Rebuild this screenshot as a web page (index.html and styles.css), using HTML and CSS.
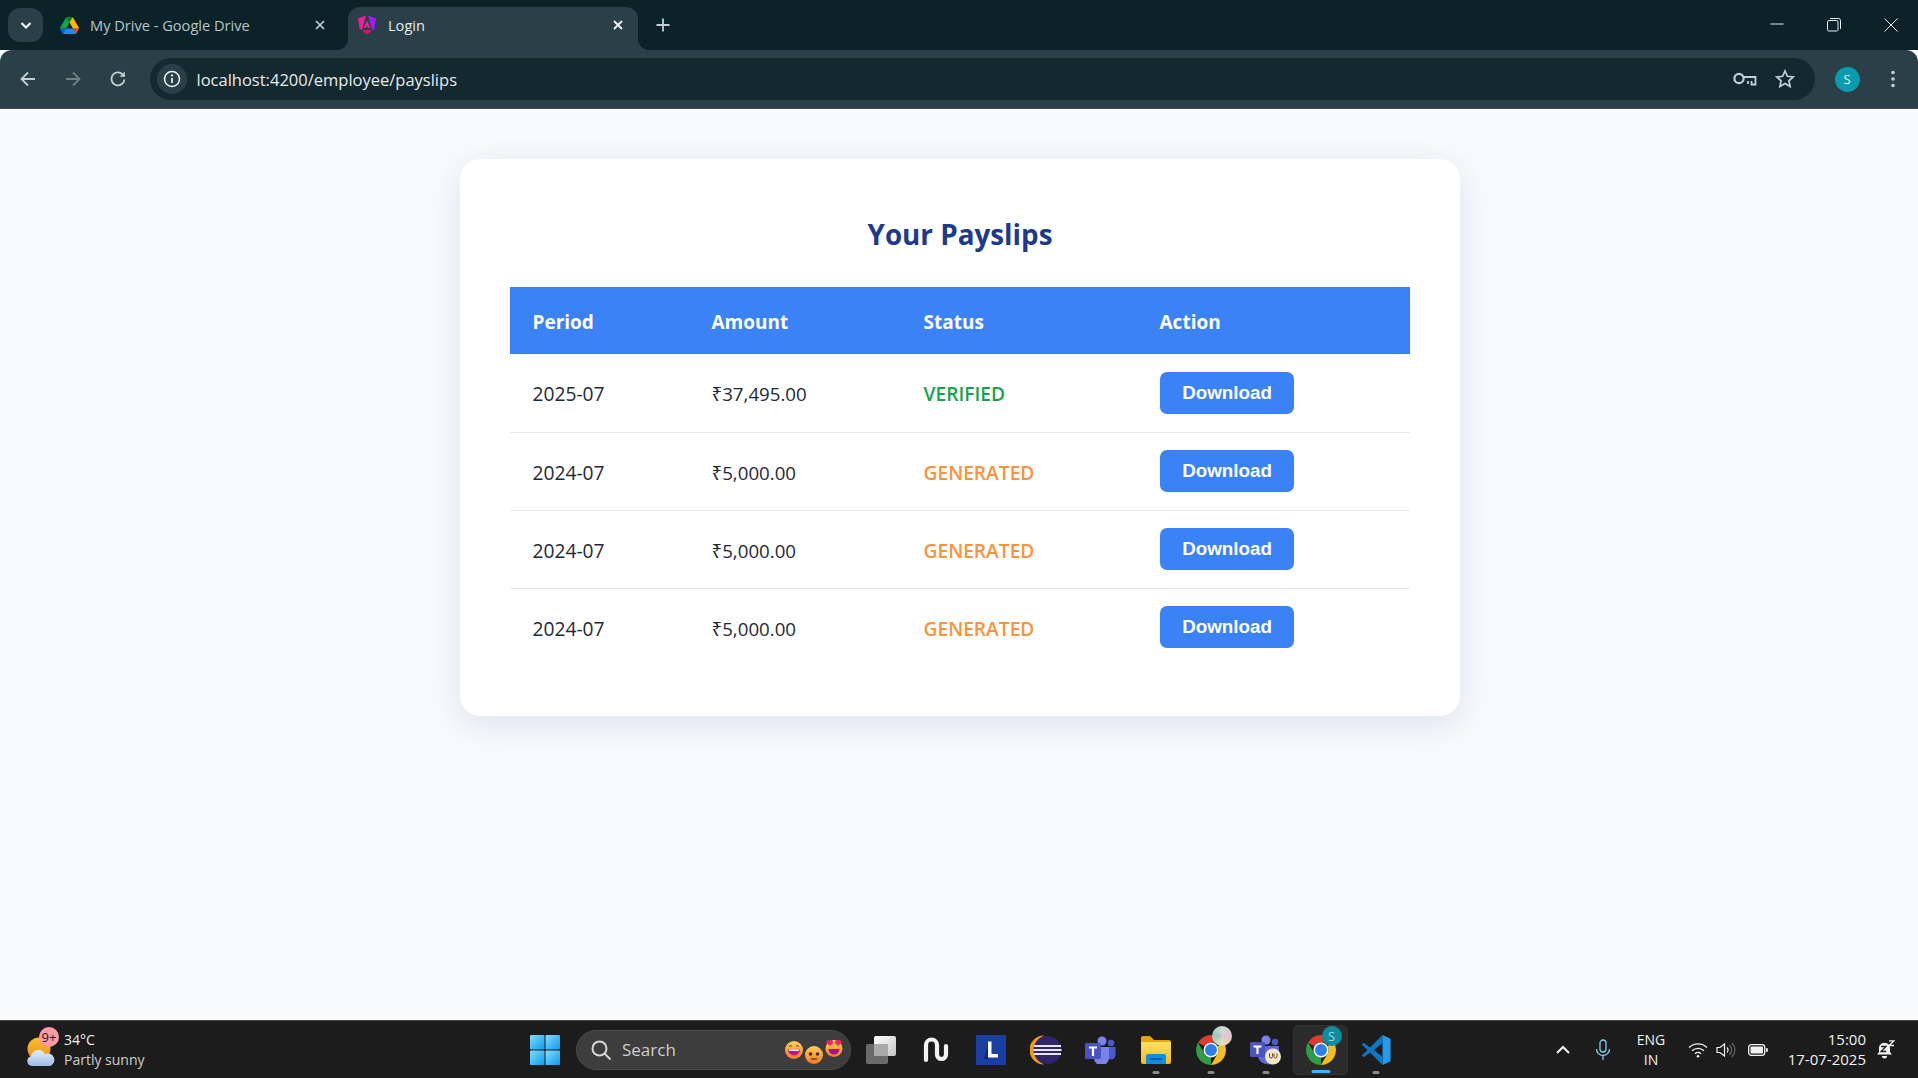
FILE: index.html
```html
<!DOCTYPE html>
<html lang="en">
<head>
<meta charset="utf-8">
<title>Login</title>
<link rel="stylesheet" href="styles.css">
</head>
<body>
<svg class="defs" width="0" height="0" aria-hidden="true">
  <defs>
    <symbol id="chrome" viewBox="4 4 40 40">
      <path d="M6.68 14A20 20 0 0 1 41.32 14L24 14A10 10 0 0 0 15.34 19Z" fill="#db3c30"/>
      <path d="M41.32 14A20 20 0 0 1 24 44L32.66 29A10 10 0 0 0 32.66 19Z" fill="#f5bd1f"/>
      <path d="M24 44A20 20 0 0 1 6.68 14L15.34 29A10 10 0 0 0 24 34Z" fill="#2f9e49"/>
      <circle cx="24" cy="24" r="10" fill="#fff"/>
      <circle cx="24" cy="24" r="8" fill="#2f7fe8"/>
    </symbol>
    <linearGradient id="win" x1="0" y1="0" x2="1" y2="1"><stop offset="0" stop-color="#86dcf8"/><stop offset="1" stop-color="#0a9bf0"/></linearGradient>
    <linearGradient id="emoji" x1="0" y1="0" x2="0" y2="1"><stop offset="0" stop-color="#ffd25a"/><stop offset="1" stop-color="#f9762a"/></linearGradient>
    <linearGradient id="sun" x1="0" y1="0" x2="0" y2="1"><stop offset="0" stop-color="#f9c22e"/><stop offset="1" stop-color="#ef8a1a"/></linearGradient>
    <linearGradient id="cloud" x1="0" y1="0" x2="0" y2="1"><stop offset="0" stop-color="#e6effa"/><stop offset="1" stop-color="#9dbbe6"/></linearGradient>
    <linearGradient id="folder" x1="0" y1="0" x2="0" y2="1"><stop offset="0" stop-color="#ffe16a"/><stop offset="1" stop-color="#f7b916"/></linearGradient>
    <linearGradient id="tv" x1="0" y1="0" x2="1" y2="1"><stop offset="0" stop-color="#ffffff"/><stop offset="1" stop-color="#c4c4c4"/></linearGradient>
  </defs>
</svg>

<div class="tabstrip">
  <button class="tab-search" type="button">
    <svg width="14" height="14" viewBox="0 0 14 14"><path d="M2.5 5l4.5 4.5L11.500 5" class="ic-white" stroke-width="2.2"/></svg>
  </button>
  <div class="tab tab-idle">
    <svg class="favicon" width="19" height="17" viewBox="0 0 87.3 78">
      <path d="m6.6 66.85 3.85 6.65c.8 1.4 1.95 2.5 3.3 3.3l13.75-23.8h-27.5c0 1.55.4 3.1 1.2 4.5z" fill="#0066da"/>
      <path d="m43.65 25-13.75-23.8c-1.35.8-2.5 1.9-3.3 3.3l-25.4 44a9.06 9.06 0 0 0 -1.2 4.5h27.5z" fill="#00ac47"/>
      <path d="m73.55 76.8c1.35-.8 2.5-1.9 3.3-3.3l1.6-2.75 7.65-13.25c.8-1.4 1.2-2.95 1.2-4.5h-27.502l5.852 11.5z" fill="#ea4335"/>
      <path d="m43.65 25 13.75-23.8c-1.35-.8-2.9-1.2-4.5-1.2h-18.5c-1.6 0-3.15.45-4.5 1.2z" fill="#00832d"/>
      <path d="m59.8 53h-32.3l-13.75 23.8c1.35.8 2.9 1.2 4.5 1.2h50.8c1.6 0 3.15-.45 4.5-1.2z" fill="#2684fc"/>
      <path d="m73.4 26.5-12.7-22c-.8-1.4-1.95-2.5-3.3-3.3l-13.75 23.8 16.15 28h27.45c0-1.55-.4-3.1-1.2-4.5z" fill="#ffba00"/>
    </svg>
    <span class="tab-title">My Drive - Google Drive</span>
    <svg class="tab-close" width="12" height="12" viewBox="0 0 12 12"><path d="M2 2l8 8M10 2l-8 8" class="ic-soft" stroke-width="1.7"/></svg>
  </div>
  <div class="tab tab-active">
    <svg class="favicon" width="20" height="20" viewBox="0 0 20 20">
      <path d="M9 0.5L1 3.5l1.6 10.3L5 15.2Z" fill="#ee1f9b"/>
      <path d="M11 0.5l8 3-1.6 10.3L15 15.2Z" fill="#9a1ff0"/>
      <path d="M10 5.5L6.8 13h2l.5-1.3h1.4l.5 1.3h2Z" fill="#e8288d"/>
      <path d="M6 15h8v1.8L10 19.5 6 16.8Z" fill="#e60d55"/>
    </svg>
    <span class="tab-title tab-title-active">Login</span>
    <svg class="tab-close" width="12" height="12" viewBox="0 0 12 12"><path d="M2 2l8 8M10 2l-8 8" class="ic-white" stroke-width="1.9"/></svg>
  </div>
  <svg class="new-tab" width="14" height="14" viewBox="0 0 14 14"><path d="M7 0.5v13M0.5 7h13" class="ic-soft" stroke-width="1.8"/></svg>
  <div class="win-controls">
    <svg width="14" height="14" viewBox="0 0 14 14"><path d="M0.5 6h13" class="ic-bright" stroke-width="1"/></svg>
    <svg width="14" height="14" viewBox="0 0 14 14"><rect x="0.5" y="2.5" width="10.5" height="10.5" rx="1.5" class="ic-bright" stroke-width="1"/><path d="M3 0.5h8.5a2 2 0 0 1 2 2V11" class="ic-bright" stroke-width="1"/></svg>
    <svg width="14" height="14" viewBox="0 0 14 14"><path d="M0.5 0.5l13 13M13.5 0.5l-13 13" class="ic-bright" stroke-width="1"/></svg>
  </div>
</div>

<div class="toolbar">
  <svg class="tool-ic" width="18" height="18" viewBox="0 0 18 18"><path d="M16 9H2.5M9 2.5L2.5 9 9 15.5" class="ic-soft" stroke-width="1.8"/></svg>
  <svg class="tool-ic" width="18" height="18" viewBox="0 0 18 18"><path d="M2 9h13.5M9 2.5L15.5 9 9 15.5" class="ic-dim" stroke-width="1.8"/></svg>
  <svg class="tool-ic" width="18" height="18" viewBox="0 0 18 18"><path d="M15.4 9.5a6.5 6.5 0 1 1-1.8-5.1L15.5 6.3" class="ic-soft" stroke-width="1.8"/><path d="M15.8 1.5v5.3h-5.3" class="ic-soft-fill"/></svg>
  <div class="omnibox">
    <span class="info-wrap">
      <svg width="18" height="18" viewBox="0 0 18 18"><circle cx="9" cy="9" r="7.5" class="ic-bright" stroke-width="1.6"/><path d="M9 8v5" class="ic-bright" stroke-width="1.8"/><circle cx="9" cy="5.4" r="1.1" class="ic-bright-fill"/></svg>
    </span>
    <span class="url">localhost:4200/employee/payslips</span>
    <svg class="key" width="24" height="14" viewBox="0 0 24 14"><circle cx="6" cy="6.500" r="4.6" class="ic-soft" stroke-width="2.200"/><path d="M10.5 5H22.5V12.500H18.500V9M15 9v3" class="ic-soft" stroke-width="1.8"/></svg>
    <svg class="star" width="20" height="20" viewBox="0 0 20 20"><path d="M10 2l2.4 5.3 5.8.6-4.3 3.9 1.2 5.7L10 14.6l-5.1 2.9 1.2-5.7L1.800 7.900l5.800-.6Z" class="ic-soft" stroke-width="1.700"/></svg>
  </div>
  <span class="avatar">S</span>
  <svg class="dots" width="6" height="18" viewBox="0 0 6 18"><circle cx="3" cy="2.500" r="1.800" class="ic-soft-fill"/><circle cx="3" cy="9" r="1.800" class="ic-soft-fill"/><circle cx="3" cy="15.500" r="1.800" class="ic-soft-fill"/></svg>
</div>

<main class="page">
  <section class="card">
    <h2 class="card-title">Your Payslips</h2>
    <table class="slips">
      <colgroup><col class="c1"><col class="c2"><col class="c3"><col class="c4"></colgroup>
      <thead>
        <tr><th>Period</th><th>Amount</th><th>Status</th><th>Action</th></tr>
      </thead>
      <tbody>
        <tr><td>2025-07</td><td class="money">₹37,495.00</td><td class="verified">VERIFIED</td><td class="act"><button class="dl" type="button">Download</button></td></tr>
        <tr><td>2024-07</td><td class="money">₹5,000.00</td><td class="generated">GENERATED</td><td class="act"><button class="dl" type="button">Download</button></td></tr>
        <tr><td>2024-07</td><td class="money">₹5,000.00</td><td class="generated">GENERATED</td><td class="act"><button class="dl" type="button">Download</button></td></tr>
        <tr><td>2024-07</td><td class="money">₹5,000.00</td><td class="generated">GENERATED</td><td class="act"><button class="dl" type="button">Download</button></td></tr>
      </tbody>
    </table>
  </section>
</main>

<footer class="taskbar">
  <div class="weather">
    <span class="weather-ic">
      <svg width="30" height="32" viewBox="0 0 30 32">
        <circle cx="13" cy="13" r="11.500" fill="url(#sun)"/>
        <path d="M6 30a5 5 0 0 1-1-9.800 7.500 7.500 0 0 1 14-2.200 6 6 0 0 1 5.500 12Z" fill="url(#cloud)"/>
      </svg>
      <span class="badge">9+</span>
    </span>
    <span class="weather-text"><span class="temp">34°C</span><span class="cond">Partly sunny</span></span>
  </div>
  <div class="start">
    <svg width="30" height="30" viewBox="0 0 30 30">
      <rect x="0" y="0" width="14.500" height="14.500" rx="1" fill="url(#win)"/>
      <rect x="15.500" y="0" width="14.500" height="14.500" rx="1" fill="url(#win)"/>
      <rect x="0" y="15.500" width="14.500" height="14.500" rx="1" fill="url(#win)"/>
      <rect x="15.500" y="15.500" width="14.500" height="14.500" rx="1" fill="url(#win)"/>
    </svg>
  </div>
  <div class="search">
    <svg width="22" height="22" viewBox="0 0 22 22"><circle cx="9.500" cy="9.500" r="7" class="ic-search" stroke-width="2"/><path d="M14.500 14.500l6 6" class="ic-search" stroke-width="2"/></svg>
    <span class="search-text">Search</span>
    <span class="emojis">
      <svg class="em em1" width="18" height="18" viewBox="0 0 18 18"><circle cx="9" cy="9" r="9" fill="url(#emoji)"/><path d="M3 8.500h12a6 6 0 0 1-12 0Z" fill="#b4178f"/><path d="M4 8.500h10v1.500H4Z" fill="#fff"/><path d="M4 5.500q1.500-2 3 0M11 5.500q1.500-2 3 0" fill="none" stroke="#6b3a10" stroke-width="1"/></svg>
      <svg class="em em2" width="18" height="18" viewBox="0 0 18 18"><circle cx="9" cy="9" r="9" fill="url(#emoji)"/><circle cx="5.500" cy="8" r="1.800" fill="#4a2a10"/><circle cx="12.500" cy="8" r="1.800" fill="#4a2a10"/><path d="M6 13h6" stroke="#4a2a10" stroke-width="1.200"/></svg>
      <svg class="em em3" width="18" height="18" viewBox="0 0 18 18"><circle cx="9" cy="9.500" r="8.500" fill="url(#emoji)"/><path d="M3.500 10h11a5.500 5.500 0 0 1-11 0Z" fill="#a5158a"/><path d="M5 1.500c-2-1.500-4 .5-3.500 2.500L5 7l3-3c.6-2-1.500-4-3-2.500ZM13 1.500c-1.500-1.500-3.600.5-3 2.500l3 3 3.500-3c.5-2-1.500-4-3.500-2.500Z" fill="#f4265e"/></svg>
    </span>
  </div>

  <div class="apps">
    <span class="app">
      <svg width="30" height="28" viewBox="0 0 30 28">
        <rect x="0" y="8" width="22" height="20" rx="2" fill="#6a6a6a"/>
        <rect x="8" y="0" width="22" height="20" rx="2" fill="url(#tv)"/>
        <rect x="8" y="8" width="14" height="12" fill="#a9a9a9"/>
      </svg>
    </span>
    <span class="app">
      <svg width="28" height="28" viewBox="0 0 28 28"><path d="M4 24V9a5.500 5.500 0 0 1 11 0V18.500a4.500 4.500 0 0 0 9 0V10" fill="none" stroke="#f3f3f3" stroke-width="4.200" stroke-linecap="round"/></svg>
    </span>
    <span class="app">
      <svg width="30" height="30" viewBox="0 0 30 30">
        <rect width="30" height="30" fill="#1a3fa3"/>
        <path d="M9 21l3-12v15H8Z" fill="#0f2a63"/>
        <path d="M12 6.500h3.500V19H22v3.500H12Z" fill="#fff"/>
      </svg>
    </span>
    <span class="app">
      <svg width="32" height="30" viewBox="0 0 32 30">
        <path d="M14 0.500a14.500 14.500 0 0 0 0 29 16 16 0 0 1 0-29Z" fill="#f39a1c"/>
        <circle cx="17.500" cy="15" r="14" fill="#2f2569"/>
        <path d="M4 11h27M3.500 15h28M4 19h27" stroke="#e9e6f5" stroke-width="2"/>
      </svg>
    </span>
    <span class="app">
      <svg width="32" height="28" viewBox="0 0 32 28">
        <circle cx="17" cy="5" r="4.500" fill="#7b83eb"/>
        <circle cx="26" cy="7" r="3.200" fill="#5059c9"/>
        <path d="M21 11h9.500v8a4.500 4.500 0 0 1-9 0Z" fill="#5059c9"/>
        <path d="M9 11h15v11a7.500 7.500 0 0 1-15 0Z" fill="#7b83eb"/>
        <rect x="0" y="7" width="16" height="16" rx="1.500" fill="#4b53bc"/>
        <path d="M4 10.500h8v2H9.100V20H6.900v-7.500H4Z" fill="#fff"/>
      </svg>
    </span>
    <span class="app app-open">
      <svg width="30" height="28" viewBox="0 0 30 28">
        <path d="M0 2a2 2 0 0 1 2-2h7l4 4h15a2 2 0 0 1 2 2v4H0Z" fill="#e8a30f"/>
        <path d="M0 6h30v20a2 2 0 0 1-2 2H2a2 2 0 0 1-2-2Z" fill="url(#folder)"/>
        <path d="M5 20a2 2 0 0 1 2-2h16a2 2 0 0 1 2 2v8H5Z" fill="#0d8ee0"/>
        <rect x="9" y="22" width="12" height="2" fill="#0a5fa8"/>
      </svg>
    </span>
    <span class="app app-open">
      <span class="chrome-wrap">
        <svg width="30" height="30" viewBox="0 0 30 30"><use href="#chrome"/></svg>
        <span class="profile-dot profile-photo"></span>
      </span>
    </span>
    <span class="app app-open">
      <svg width="32" height="30" viewBox="0 0 32 30">
        <circle cx="16" cy="5" r="4.500" fill="#7b83eb"/>
        <circle cx="25" cy="7" r="3.200" fill="#5059c9"/>
        <path d="M8 11h21v10a10 8 0 0 1-21 0Z" fill="#5f67d8"/>
        <rect x="0" y="7" width="15" height="15" rx="1.500" fill="#4b53bc"/>
        <path d="M3.500 10.500h8v2H8.600V19H6.400v-6.500H3.500Z" fill="#fff"/>
        <circle cx="23" cy="21.500" r="8" fill="#f3e6c8"/>
        <path d="M19.500 18.500v3a1.500 1.500 0 0 0 3 0v-3M24 18.500v3a1.500 1.500 0 0 0 3 0v-3" fill="none" stroke="#5e4a26" stroke-width="1"/>
      </svg>
    </span>
    <span class="app app-active">
      <span class="chrome-wrap">
        <svg width="30" height="30" viewBox="0 0 30 30"><use href="#chrome"/></svg>
        <span class="profile-dot profile-s">S</span>
      </span>
    </span>
    <span class="app app-open">
      <svg width="30" height="30" viewBox="0 0 30 30">
        <path d="M21.500 0L29.500 3.700V26.300L21.500 30Z" fill="#1f9cf0"/>
        <path d="M21.500 0L9 12.500 3 8 0.500 9.300 6.500 15 0.500 20.700 3 22 9 17.500 21.500 30V21.700L12.800 15 21.500 8.300Z" fill="#0a78c4"/>
      </svg>
    </span>
  </div>

  <div class="tray">
    <svg class="tr-chev" width="16" height="10" viewBox="0 0 16 10"><path d="M2 8l6-6 6 6" class="ic-tray" stroke-width="2"/></svg>
    <svg class="tr-mic" width="16" height="22" viewBox="0 0 16 22"><rect x="5" y="1" width="6" height="12" rx="3" class="ic-mic" stroke-width="1.300"/><path d="M1.500 10a6.500 6.500 0 0 0 13 0M8 16.500V21" class="ic-mic" stroke-width="1.300"/></svg>
    <span class="lang"><span>ENG</span><span>IN</span></span>
    <svg class="tr-wifi" width="20" height="16" viewBox="0 0 20 16"><path d="M1 5.500a13 13 0 0 1 18 0M4 8.700a8.700 8.700 0 0 1 12 0M7 11.700a4.300 4.300 0 0 1 6 0" class="ic-tray" stroke-width="1.300"/><circle cx="10" cy="14.200" r="1.300" class="ic-tray-fill"/></svg>
    <svg class="tr-vol" width="20" height="18" viewBox="0 0 20 18"><path d="M1 6.500h3L8.500 3v12L4 11.500H1Z" class="ic-tray" stroke-width="1.200"/><path d="M11 6.500a3.500 3.500 0 0 1 0 5" class="ic-tray" stroke-width="1.200"/><path d="M13.500 4a7 7 0 0 1 0 10M16 2a10 10 0 0 1 0 14" class="ic-traydim" stroke-width="1.200"/></svg>
    <svg class="tr-bat" width="20" height="12" viewBox="0 0 20 12"><rect x="0.700" y="0.700" width="16" height="10.600" rx="2.500" class="ic-tray" stroke-width="1.300"/><rect x="2.500" y="2.500" width="12.500" height="7" rx="1" class="ic-tray-fill"/><rect x="18" y="4" width="1.800" height="4" rx="0.800" class="ic-tray-fill"/></svg>
    <span class="clock"><span>15:00</span><span>17-07-2025</span></span>
    <svg class="tr-bell" width="18" height="20" viewBox="0 0 18 20">
      <path d="M7 3a5 5 0 0 0-5 5v4l-2 2.500h15L13 12V8a5 5 0 0 0-6-5Z" fill="#f3f3f3"/>
      <path d="M5 16h5a2.500 2.500 0 0 1-5 0Z" fill="#f3f3f3"/>
      <path d="M4 6.500h5L4 11.500h5" fill="none" stroke="#1c1c1c" stroke-width="1.300"/>
      <path d="M12 0.800h5l-5 4.700h5" fill="none" stroke="#f3f3f3" stroke-width="1.300"/>
    </svg>
  </div>
</footer>
</body>
</html>
```

FILE: styles.css
```css
* { box-sizing: border-box; }
html, body { height: 100%; }
body {
  margin: 0;
  height: 1078px;
  overflow: hidden;
  display: flex;
  flex-direction: column;
  background: #f8fafc;
  font-family: "Open Sans", "Noto Sans", sans-serif;
}
.defs { position: absolute; }

.ic-white { fill: none; stroke: #eef2f3; }
.ic-soft { fill: none; stroke: #c3cfd3; }
.ic-dim { fill: none; stroke: #6f8086; }
.ic-bright { fill: none; stroke: #e9eeef; }
.ic-soft-fill { fill: #c3cfd3; }
.ic-bright-fill { fill: #e9eeef; }
.ic-search { fill: none; stroke: #d6d6d6; }
.ic-tray { fill: none; stroke: #f1f1f1; }
.ic-tray-fill { fill: #f1f1f1; }
.ic-traydim { fill: none; stroke: #6a6a6a; }
.ic-mic { fill: none; stroke: #7fd0ef; }

/* Browser tab strip */
.tabstrip {
  height: 50px;
  flex: none;
  display: flex;
  align-items: flex-end;
  background: #0b2229;
  padding-left: 8px;
}
.tab-search {
  width: 35px;
  height: 34px;
  margin-bottom: 8px;
  padding: 0;
  border: 0;
  border-radius: 12px;
  background: #2a3f47;
  display: flex;
  align-items: center;
  justify-content: center;
}
.tab {
  height: 43px;
  display: flex;
  align-items: center;
  padding-bottom: 7px;
  position: relative;
}
.tab-idle { width: 305px; padding-left: 17px; }
.tab-active {
  width: 290px;
  padding-left: 9px;
  background: #2a3f47;
  border-radius: 12px 12px 0 0;
}
.tab-active::before, .tab-active::after {
  content: "";
  position: absolute;
  bottom: 0;
  width: 12px;
  height: 12px;
}
.tab-active::before { left: -12px; background: radial-gradient(circle at 0 0, transparent 12px, #2a3f47 12.5px); }
.tab-active::after { right: -12px; background: radial-gradient(circle at 100% 0, transparent 12px, #2a3f47 12.5px); }
.favicon { flex: none; }
.tab-title {
  margin-left: 11px;
  font-size: 14.6px;
  color: #b7c5ca;
  white-space: nowrap;
  flex: 1;
}
.tab-title-active { color: #e4eaec; }
.tab-close { flex: none; margin-right: 14px; }
.tab-idle .tab-close { margin-right: 22px; }
.new-tab { margin: 0 0 18px 18px; }
.win-controls {
  margin-left: auto;
  align-self: stretch;
  display: flex;
  align-items: center;
  gap: 43px;
  padding: 0 20px 0 0;
}

/* Browser toolbar */
.toolbar {
  height: 59px;
  flex: none;
  display: flex;
  align-items: center;
  background: #2a3f47;
  border-bottom: 1px solid #3e4b50;
  border-radius: 12px 12px 0 0;
  padding-left: 19px;
}
.tool-ic { flex: none; margin-right: 27px; }
.omnibox {
  width: 1665px;
  height: 42px;
  margin-left: -4.5px;
  display: flex;
  align-items: center;
  background: #14282f;
  border-radius: 21px;
  padding-left: 7px;
}
.info-wrap {
  width: 30px;
  height: 30px;
  border-radius: 50%;
  background: #2a3f47;
  display: flex;
  align-items: center;
  justify-content: center;
}
.url {
  margin-left: 10px;
  font-size: 16.5px;
  color: #e6ecee;
  white-space: nowrap;
  flex: 1;
}
.key { flex: none; margin-right: 18px; }
.star { flex: none; margin-right: 20px; }
.avatar {
  width: 25px;
  height: 25px;
  margin-left: 20px;
  flex: none;
  border-radius: 50%;
  background: #0a9bb0;
  color: #e8f6f8;
  font-size: 13px;
  display: flex;
  align-items: center;
  justify-content: center;
}
.dots { flex: none; margin-left: 30px; }

/* Page */
.page {
  flex: 1;
  min-height: 0;
  padding: 50px 0 0 2px;
  display: flex;
  justify-content: center;
  align-items: flex-start;
  background: #f8fafc;
}
.card {
  width: 1000px;
  padding: 50px;
  background: #fff;
  border-radius: 20px;
  box-shadow: 0 8px 32px rgba(30, 58, 138, 0.12);
}
.card-title {
  margin: 0 0 30px;
  height: 48px;
  line-height: 50px;
  text-align: center;
  font-size: 27.8px;
  font-weight: 700;
  color: #1e3a8a;
}
.slips {
  width: 900px;
  table-layout: fixed;
  border-collapse: collapse;
  font-size: 19.2px;
  color: #1f2937;
}
.c1 { width: 179px; }
.c2 { width: 212px; }
.c3 { width: 236px; }
.c4 { width: 273px; }
.slips th {
  height: 67px;
  padding: 2px 22.5px 0;
  background: #3b82f6;
  color: #fff;
  text-align: left;
  font-size: 19px;
  font-weight: 700;
}
.slips td {
  height: 78px;
  padding: 2px 22.5px 0;
  border-bottom: 1px solid #e2e8f0;
}
.slips td.money { font-size: 18.7px; }
.slips tbody tr:last-child td { border-bottom: 0; }
.verified { color: #16a34a; font-weight: 600; }
.generated { color: #fb923c; font-weight: 600; }
.slips td.act { vertical-align: middle; padding-top: 0; }
.dl {
  display: block;
  width: 134px;
  height: 42px;
  margin-left: 0.5px;
  padding: 0;
  border: 0;
  border-radius: 7px;
  background: #3b82f6;
  color: #fff;
  font-family: "Liberation Sans", Arial, sans-serif;
  font-size: 18.8px;
  font-weight: 700;
}

/* Windows taskbar */
.taskbar {
  height: 58px;
  flex: none;
  display: flex;
  align-items: center;
  background: #1c1c1c;
  border-top: 1px solid #444;
  color: #f1f1f1;
  position: relative;
}
.weather {
  width: 517px;
  flex: none;
  display: flex;
  align-items: center;
  padding-left: 26px;
}
.weather-ic { position: relative; width: 38px; height: 32px; display: block; margin-top: 4px; }
.badge {
  position: absolute;
  left: 13px;
  top: -9px;
  width: 20px;
  height: 20px;
  border-radius: 50%;
  background: #fd9aa5;
  color: #1c1c1c;
  font-size: 13px;
  line-height: 20px;
  text-align: center;
}
.weather-text { display: flex; flex-direction: column; line-height: 20px; }
.temp { font-size: 14px; }
.cond { font-size: 14px; color: #cfcfcf; }
.start {
  width: 55px;
  flex: none;
  display: flex;
  align-items: center;
  justify-content: center;
}
.search {
  width: 275px;
  height: 40px;
  margin-left: 4px;
  flex: none;
  display: flex;
  align-items: center;
  padding-left: 13px;
  background: #3d3d3d;
  border: 1px solid #4a4a4a;
  border-radius: 20px;
  position: relative;
}
.search-text { margin-left: 10px; font-size: 17px; color: #cdcdcd; }
.emojis { position: absolute; left: 208px; top: 0; width: 60px; height: 38px; }
.em { position: absolute; }
.em1 { left: 0; top: 10px; }
.em2 { left: 20px; top: 15px; }
.em3 { left: 40px; top: 8px; }
.apps { display: flex; flex: none; margin-left: 2px; }
.app {
  width: 55px;
  height: 50px;
  display: flex;
  align-items: center;
  justify-content: center;
  position: relative;
}
.app-open::after, .app-active::after {
  content: "";
  position: absolute;
  bottom: 1px;
  left: 50%;
  transform: translateX(-50%);
  width: 7px;
  height: 3px;
  border-radius: 2px;
  background: #8a8a8a;
}
.app-active { background: #2b2b2b; border-radius: 5px; border: 1px solid #333; }
.app-active::after { width: 19px; background: #3cb5f6; }
.chrome-wrap { position: relative; display: block; width: 30px; height: 30px; }
.chrome-wrap > svg { display: block; }
.profile-dot {
  position: absolute;
  left: 16px;
  top: -9px;
  width: 20px;
  height: 20px;
  border-radius: 50%;
}
.profile-photo { background: conic-gradient(#c9dcd2, #e9bfd0, #dfe0b8, #9ec5c2, #c9dcd2); }
.profile-s {
  background: #0f8d9e;
  color: #8fdde6;
  font-size: 13px;
  line-height: 20px;
  text-align: center;
}
.tray {
  flex: 1;
  display: flex;
  align-items: center;
  position: relative;
  height: 100%;
}
.tr-chev { flex: none; margin-left: 152px; }
.tr-mic { flex: none; margin-left: 24px; }
.lang {
  width: 40px;
  margin-left: 20px;
  display: flex;
  flex-direction: column;
  align-items: center;
  font-size: 14px;
  line-height: 20px;
}
.tr-wifi { flex: none; margin-left: 17px; }
.tr-vol { flex: none; margin-left: 8px; }
.tr-bat { flex: none; margin-left: 12px; }
.clock {
  width: 90px;
  margin-left: 8px;
  margin-top: -2px;
  display: flex;
  flex-direction: column;
  align-items: flex-end;
  font-size: 15px;
  line-height: 20px;
}
.tr-bell { flex: none; margin-left: 11px; }
```
